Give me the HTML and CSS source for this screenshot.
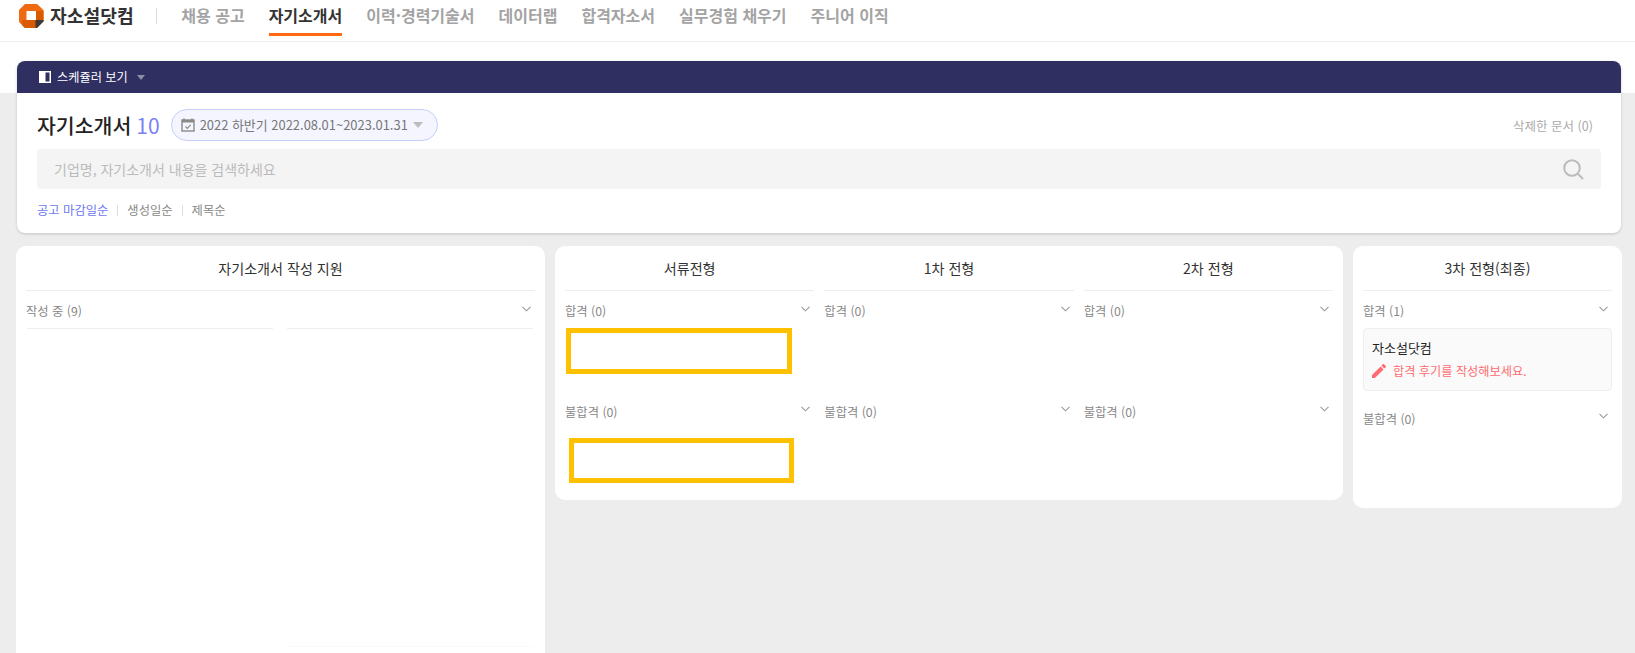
FILE: index.html
```html
<!DOCTYPE html>
<html lang="ko">
<head>
<meta charset="utf-8">
<title>자소설닷컴</title>
<link rel="stylesheet" href="styles.css">
</head>
<body>
<header class="topbar">
  <a class="brand">
    <svg class="brand-mark" width="25" height="24" viewBox="0 0 25 24">
      <path d="M6 0H18L24.5 6V17L18 24H6L0 18V6Z" fill="#f06a12"/>
      <path d="M17 7H24.5V17H17V24H6L3 21V16H17Z" fill="#d95a00"/>
      <path d="M16.500 16H24.500L24.500 17.500 18 24H16.500Z" fill="#3a3a3a"/>
      <rect x="7.500" y="7" width="9.500" height="9" fill="#fff"/>
    </svg>
    <span class="brand-name">자소설닷컴</span>
  </a>
  <span class="brand-sep"></span>
  <nav class="nav">
    <a class="nav-item">채용 공고</a>
    <a class="nav-item is-active">자기소개서</a>
    <a class="nav-item">이력·경력기술서</a>
    <a class="nav-item">데이터랩</a>
    <a class="nav-item">합격자소서</a>
    <a class="nav-item">실무경험 채우기</a>
    <a class="nav-item">주니어 이직</a>
  </nav>
</header>
<main class="page">
  <section class="summary">
    <div class="scheduler-bar">
      <svg class="scheduler-icon" width="12" height="12" viewBox="0 0 12 12">
        <rect x="0" y="0" width="12" height="12" fill="#fff"/>
        <rect x="6.500" y="1.500" width="4" height="9" fill="#2f3061"/>
      </svg>
      <span class="scheduler-label">스케쥴러 보기</span>
      <span class="caret caret-dim"></span>
    </div>
    <div class="summary-body">
      <div class="title-row">
        <h1 class="title">자기소개서</h1>
        <span class="title-count">10</span>
        <button class="period">
          <svg class="period-icon" width="14" height="14" viewBox="0 0 14 14">
            <path d="M3 0.500V2.500M11 0.500V2.500" stroke="#8a8a8a" stroke-width="1.600" fill="none"/>
            <rect x="1" y="2" width="12" height="11" fill="none" stroke="#8a8a8a" stroke-width="1.400"/>
            <rect x="1" y="2" width="12" height="2.500" fill="#8a8a8a"/>
            <path d="M4.500 8.500L6.300 10.300 9.700 6.800" stroke="#8a8a8a" stroke-width="1.200" fill="none"/>
          </svg>
          <span class="period-text">2022 하반기 2022.08.01~2023.01.31</span>
          <span class="caret caret-period"></span>
        </button>
        <a class="deleted">삭제한 문서 (0)</a>
      </div>
      <div class="search">
        <span class="search-placeholder">기업명, 자기소개서 내용을 검색하세요</span>
        <svg class="search-icon" width="21" height="21" viewBox="0 0 21 21">
          <circle cx="9" cy="9" r="7.800" fill="none" stroke="#bbb" stroke-width="2"/>
          <path d="M14.800 14.800L20 20" stroke="#bbb" stroke-width="2" fill="none"/>
        </svg>
      </div>
      <div class="sorts">
        <a class="sort is-active">공고 마감일순</a>
        <span class="sort-sep"></span>
        <a class="sort">생성일순</a>
        <span class="sort-sep"></span>
        <a class="sort">제목순</a>
      </div>
    </div>
  </section>

  <section class="board">
    <div class="panel panel-write">
      <div class="col">
        <h2 class="col-title">자기소개서 작성 지원</h2>
        <div class="group-head"><span class="group-name">작성 중 (9)</span><svg class="chev" width="9" height="6" viewBox="0 0 9 6"><path d="M0.500 0.800L4.500 4.800 8.500 0.800" fill="none" stroke="#999" stroke-width="1.100"/></svg></div>
        <div class="stubs">
          <span class="stub"></span>
          <span class="stub"></span>
        </div>
        <div class="stubs stubs-bottom">
          <span class="stub stub-none"></span>
          <span class="stub stub-faint"></span>
        </div>
      </div>
    </div>

    <div class="panel panel-stages">
      <div class="col">
        <h2 class="col-title">서류전형</h2>
        <div class="group-head"><span class="group-name">합격 (0)</span><svg class="chev" width="9" height="6" viewBox="0 0 9 6"><path d="M0.500 0.800L4.500 4.800 8.500 0.800" fill="none" stroke="#999" stroke-width="1.100"/></svg></div>
        <div class="group-body"></div>
        <div class="group-head group-head-lower"><span class="group-name">불합격 (0)</span><svg class="chev" width="9" height="6" viewBox="0 0 9 6"><path d="M0.500 0.800L4.500 4.800 8.500 0.800" fill="none" stroke="#999" stroke-width="1.100"/></svg></div>
      </div>
      <div class="col">
        <h2 class="col-title">1차 전형</h2>
        <div class="group-head"><span class="group-name">합격 (0)</span><svg class="chev" width="9" height="6" viewBox="0 0 9 6"><path d="M0.500 0.800L4.500 4.800 8.500 0.800" fill="none" stroke="#999" stroke-width="1.100"/></svg></div>
        <div class="group-body"></div>
        <div class="group-head group-head-lower"><span class="group-name">불합격 (0)</span><svg class="chev" width="9" height="6" viewBox="0 0 9 6"><path d="M0.500 0.800L4.500 4.800 8.500 0.800" fill="none" stroke="#999" stroke-width="1.100"/></svg></div>
      </div>
      <div class="col">
        <h2 class="col-title">2차 전형</h2>
        <div class="group-head"><span class="group-name">합격 (0)</span><svg class="chev" width="9" height="6" viewBox="0 0 9 6"><path d="M0.500 0.800L4.500 4.800 8.500 0.800" fill="none" stroke="#999" stroke-width="1.100"/></svg></div>
        <div class="group-body"></div>
        <div class="group-head group-head-lower"><span class="group-name">불합격 (0)</span><svg class="chev" width="9" height="6" viewBox="0 0 9 6"><path d="M0.500 0.800L4.500 4.800 8.500 0.800" fill="none" stroke="#999" stroke-width="1.100"/></svg></div>
      </div>
      <span class="mark mark-pass"></span>
      <span class="mark mark-fail"></span>
    </div>

    <div class="panel panel-final">
      <div class="col">
        <h2 class="col-title">3차 전형(최종)</h2>
        <div class="group-head"><span class="group-name">합격 (1)</span><svg class="chev" width="9" height="6" viewBox="0 0 9 6"><path d="M0.500 0.800L4.500 4.800 8.500 0.800" fill="none" stroke="#999" stroke-width="1.100"/></svg></div>
        <article class="doc">
          <div class="doc-name">자소설닷컴</div>
          <div class="doc-note">
            <svg class="doc-pencil" width="14" height="14" viewBox="3 3 18 18"><path d="M3 17.250V21h3.750L17.810 9.940l-3.750-3.750L3 17.250zM20.710 7.040c.39-.39.39-1.020 0-1.410l-2.340-2.340c-.39-.39-1.020-.39-1.410 0l-1.830 1.830 3.750 3.750 1.830-1.830z" fill="#ff6b70"/></svg>
            <span>합격 후기를 작성해보세요.</span>
          </div>
        </article>
        <div class="group-head group-head-lower group-head-final"><span class="group-name">불합격 (0)</span><svg class="chev" width="9" height="6" viewBox="0 0 9 6"><path d="M0.500 0.800L4.500 4.800 8.500 0.800" fill="none" stroke="#999" stroke-width="1.100"/></svg></div>
      </div>
    </div>
  </section>
</main>
</body>
</html>
```
FILE: styles.css
```css
* { box-sizing: border-box; }
html, body { margin: 0; padding: 0; height: 100%; overflow: hidden; }
body {
  font-family: "Noto Sans CJK KR", "Noto Sans", sans-serif;
  background: #ededed;
  color: #333;
}
h1, h2 { margin: 0; font-weight: 500; }

/* top bar */
.topbar {
  display: flex;
  align-items: flex-start;
  height: 42px;
  padding-left: 19px;
  background: #fff;
  border-bottom: 1px solid #eee;
}
.brand { display: flex; align-items: center; height: 31px; }
.brand-name {
  margin-left: 6px;
  font-size: 18.200px;
  font-weight: 700;
  line-height: 31px;
  color: #333;
}
.brand-sep {
  width: 1px;
  height: 16px;
  margin: 8px 0 0 22px;
  background: #ddd;
}
.nav { display: flex; gap: 24px; margin-left: 24.600px; }
.nav-item {
  height: 36px;
  font-size: 16px;
  font-weight: 700;
  line-height: 30px;
  color: #a3a3a3;
}
.nav-item.is-active {
  color: #333;
  border-bottom: 3px solid #ff6a13;
}

/* page */
.page {
  height: 611px;
  padding-top: 19px;
  background: linear-gradient(#fff 51px, #ededed 51px);
}

/* summary card */
.summary {
  width: 1604px;
  height: 172px;
  margin-left: 17px;
  background: #fff;
  border-radius: 8px;
  box-shadow: 0 1px 3px rgba(0, 0, 0, 0.18);
  overflow: hidden;
}
.scheduler-bar {
  display: flex;
  align-items: center;
  height: 32px;
  padding-left: 22px;
  background: #2f3061;
}
.scheduler-label {
  margin-left: 6px;
  font-size: 12.200px;
  line-height: 32px;
  color: #fff;
}
.caret {
  width: 0;
  height: 0;
  border-style: solid;
  border-color: transparent;
  border-bottom-width: 0;
}
.caret-dim {
  margin-left: 9px;
  border-width: 5px 4px 0;
  border-top-color: #8f8fa8;
}
.summary-body { padding: 16px 20px 0; }
.title-row {
  display: flex;
  align-items: center;
  height: 32px;
}
.title {
  font-size: 20.500px;
  line-height: 32px;
  color: #222;
}
.title-count {
  margin-left: 5px;
  font-size: 21px;
  font-weight: 400;
  line-height: 32px;
  color: #7a82f5;
}
.period {
  display: flex;
  align-items: center;
  height: 32px;
  width: 267px;
  margin-left: 11px;
  padding: 0 0 0 9px;
  font: inherit;
  background: #f4f5ff;
  border: 1px solid #c6cefa;
  border-radius: 16px;
}
.period-text {
  margin-left: 5px;
  font-size: 12.950px;
  line-height: 30px;
  color: #777;
  white-space: nowrap;
}
.caret-period {
  margin-left: 5px;
  border-width: 6px 5px 0;
  border-top-color: #bdbdbd;
}
.deleted {
  margin: 0 8px 0 auto;
  font-size: 12.500px;
  color: #aaa;
}
.search {
  display: flex;
  align-items: center;
  justify-content: space-between;
  height: 40px;
  margin-top: 8px;
  padding: 0 17px 0 17px;
  background: #f4f4f4;
  border-radius: 4px;
}
.search-placeholder { font-size: 14px; color: #bbb; }
.sorts {
  display: flex;
  align-items: center;
  height: 20px;
  margin-top: 11px;
}
.sort { font-size: 12.300px; line-height: 20px; color: #888; }
.sort.is-active { color: #6f78f0; }
.sort-sep {
  width: 1px;
  height: 11px;
  margin: 0 9px;
  background: #ddd;
}

/* board */
.board {
  display: flex;
  align-items: flex-start;
  gap: 10px;
  margin-top: 13px;
  padding-left: 16px;
}
.panel {
  position: relative;
  background: #fff;
  border-radius: 10px;
}
.panel-write { width: 529px; height: 420px; padding: 0 10px; }
.panel-stages {
  display: flex;
  gap: 10px;
  width: 788px;
  height: 254px;
  padding: 0 10px;
}
.panel-stages .col { flex: 1; }
.panel-final { width: 269px; height: 262px; padding: 0 10px; }

.col-title {
  height: 45px;
  font-size: 14.100px;
  font-weight: 400;
  line-height: 44px;
  text-align: center;
  color: #333;
  border-bottom: 1px solid #eee;
}
.group-head {
  display: flex;
  justify-content: space-between;
  height: 37px;
  padding-top: 10px;
}
.group-name { font-size: 12.300px; line-height: 20px; color: #888; }
.chev { margin: 5px 4px 0 0; }
.group-head-lower .chev { margin-top: 4px; }
.group-body { height: 64px; }

.stubs { display: flex; gap: 14px; padding: 0 2px 0 1px; }
.stub { flex: 1; height: 1px; background: #eee; }
.stubs-bottom { margin-top: 317px; }
.stub-none { background: transparent; }
.stub-faint { background: #fafafa; }

.mark {
  position: absolute;
  border: 5px solid #ffc000;
}
.mark-pass { left: 11px; top: 82px; width: 226px; height: 46px; }
.mark-fail { left: 14px; top: 192px; width: 225px; height: 45px; }

.doc {
  height: 63px;
  padding: 9px 8px 0;
  background: #fafafa;
  border: 1px solid #eee;
  border-radius: 4px;
}
.doc-name { font-size: 13px; line-height: 20px; color: #222; }
.doc-note {
  display: flex;
  align-items: center;
  height: 18px;
  margin-top: 4px;
  font-size: 12.200px;
  color: #ff6b70;
}
.doc-pencil { margin-right: 7px; }
.group-head-final { margin-top: 8px; }
```
